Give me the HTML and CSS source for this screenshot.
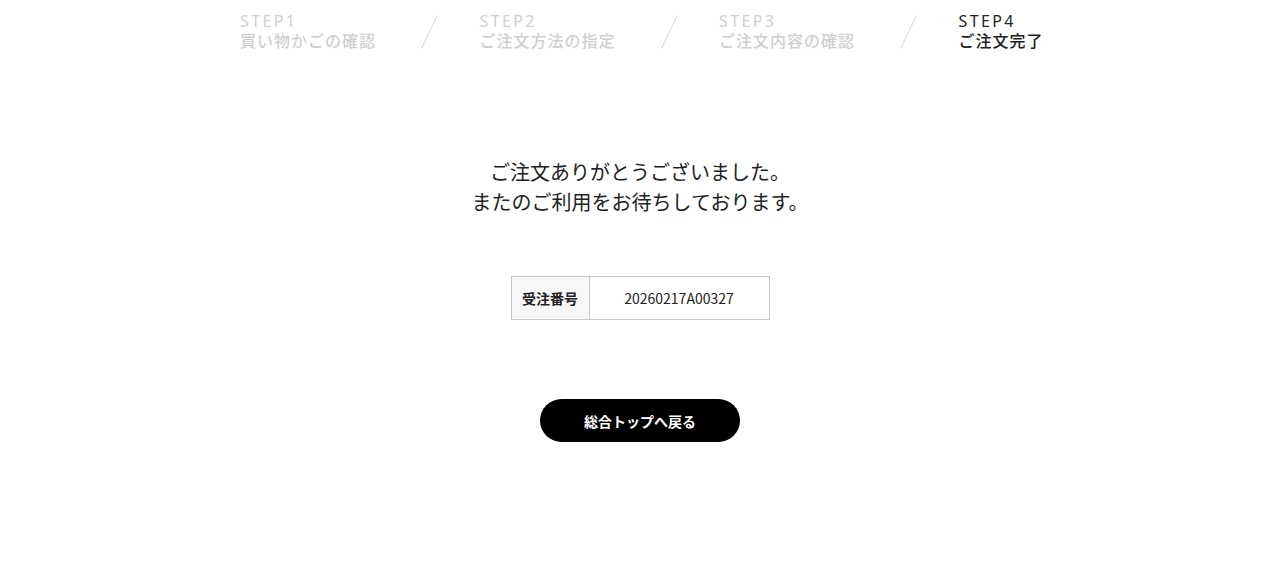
FILE: index.html
```html
<!DOCTYPE html>
<html lang="ja">
<head>
<meta charset="UTF-8" />
<meta name="viewport" content="width=device-width, initial-scale=1" />
<title>ご注文完了</title>
<link rel="stylesheet" href="styles.css">
</head>
<body>

<nav class="steps">
  <ol class="step-list">
    <li class="step">
      <div class="step-text"><span class="step-num">STEP1</span><span class="step-name">買い物かごの確認</span></div>
      <svg class="step-sep" width="17" height="34" viewBox="0 0 17 34"><line x1="16.5" y1="0.5" x2="0.5" y2="33.5" /></svg>
    </li>
    <li class="step">
      <div class="step-text"><span class="step-num">STEP2</span><span class="step-name">ご注文方法の指定</span></div>
      <svg class="step-sep" width="17" height="34" viewBox="0 0 17 34"><line x1="16.5" y1="0.5" x2="0.5" y2="33.5" /></svg>
    </li>
    <li class="step">
      <div class="step-text"><span class="step-num">STEP3</span><span class="step-name">ご注文内容の確認</span></div>
      <svg class="step-sep" width="17" height="34" viewBox="0 0 17 34"><line x1="16.5" y1="0.5" x2="0.5" y2="33.5" /></svg>
    </li>
    <li class="step current">
      <div class="step-text"><span class="step-num">STEP4</span><span class="step-name">ご注文完了</span></div>
    </li>
  </ol>
</nav>

<main class="complete">
  <p class="thanks">ご注文ありがとうございました。<br>またのご利用をお待ちしております。</p>

  <table class="order-no">
    <tr>
      <th>受注番号</th>
      <td>20260217A00327</td>
    </tr>
  </table>

  <a class="btn-top" href="#top">総合トップへ戻る</a>
</main>

</body>
</html>
```

FILE: styles.css
```css
/* Reset and base */
* {
  box-sizing: border-box;
  margin: 0;
  padding: 0;
}
body {
  font-family: "Noto Sans CJK JP", "Noto Sans", sans-serif;
  background: #fff;
  color: #222;
}

/* Step navigation */
.steps {
  width: 800px;
  margin: 0 auto;
  padding-top: 12px;
}

.step-list {
  display: grid;
  grid-template-columns: repeat(4, 239.5px);
  list-style: none;
}

.step {
  display: flex;
  justify-content: space-between;
  align-items: flex-start;
  width: 198px;
  color: #cfcfcf;
}
.step.current {
  color: #222;
}

.step-text {
  display: flex;
  flex-direction: column;
}

.step-num {
  display: block;
  font-family: "Noto Sans", sans-serif;
  font-size: 16px;
  line-height: 18px;
  letter-spacing: 2.4px;
  font-weight: 400;
}

.step-name {
  display: block;
  font-size: 16px;
  line-height: 20px;
  letter-spacing: 1px;
  font-weight: 500;
}

.step-sep {
  margin-top: 3px;
  display: block;
}
.step-sep line {
  stroke: #d4d4d4;
  stroke-width: 1;
}

/* Completion block */
.complete {
  display: flex;
  flex-direction: column;
  align-items: center;
  padding-top: 107px;
}

.thanks {
  font-size: 20px;
  line-height: 30px;
  text-align: center;
  color: #222;
}

.order-no {
  margin-top: 59px;
  border-collapse: collapse;
  font-size: 14px;
}
.order-no th,
.order-no td {
  border: 1px solid #c8c8c8;
  height: 43px;
  text-align: center;
}
.order-no th {
  width: 78px;
  background: #f7f7f7;
  font-weight: 700;
}
.order-no td {
  width: 180px;
}

.btn-top {
  margin-top: 79px;
  display: flex;
  align-items: center;
  justify-content: center;
  width: 200px;
  height: 43px;
  border-radius: 22px;
  background: #000;
  color: #fff;
  font-size: 14px;
  font-weight: 700;
  text-decoration: none;
}
```
